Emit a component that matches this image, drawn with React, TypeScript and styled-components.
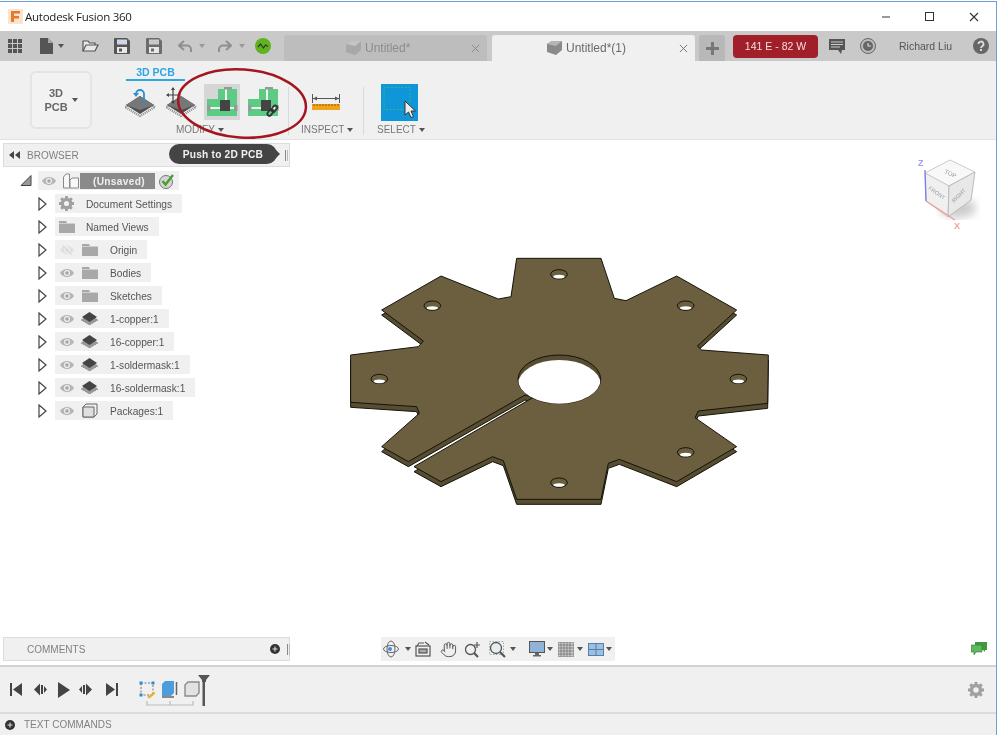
import React, { FC } from "react";
import styled, { createGlobalStyle } from "styled-components";
import { Hand } from "lucide-react";

const GlobalStyles = createGlobalStyle`
html, body {
    margin: 0;
    padding: 0;
    height: 100%;
    background: #fff;
    overflow: hidden;
}
body {
    font-family: "Liberation Sans", Arial, sans-serif;
}
svg {
    display: block;
    flex-shrink: 0;
}
`;

const Window = styled.div`
    position: relative;
    box-sizing: border-box;
    width: 997px;
    height: 734px;
    margin-top: 1px;
    border-top: 1px solid #6f9fd6;
    border-right: 1px solid #6f9fd6;
    display: flex;
    flex-direction: column;
    background: #fff;
    filter: blur(0.45px);
`;

const TitleBar = styled.div`
    height: 29px;
    display: flex;
    align-items: center;
    padding-left: 8px;
    font-family: "Open Sans", sans-serif;
    font-size: 11.5px;
    letter-spacing: -0.25px;
    color: #222;
`;

const TitleText = styled.span`
    margin-left: 2px;
    flex: 1;
`;

const WinButton = styled.div`
    width: 44px;
    display: flex;
    justify-content: center;
`;

const Toolbar = styled.div`
    height: 30px;
    background: #c9c9c9;
    display: flex;
    align-items: center;
    padding-left: 8px;
    box-sizing: border-box;
`;

const Slot = styled.div<{ $ml?: number }>`
    margin-left: ${(p) => p.$ml ?? 0}px;
    display: flex;
    align-items: center;
`;

const Caret = styled.div<{ $ml?: number; $color?: string }>`
    margin-left: ${(p) => p.$ml ?? 4}px;
    width: 0;
    height: 0;
    border-left: 3px solid transparent;
    border-right: 3px solid transparent;
    border-top: 4px solid ${(p) => p.$color ?? "#555"};
`;

const Tab = styled.div<{ $active?: boolean; $ml: number }>`
    align-self: flex-end;
    margin-left: ${(p) => p.$ml}px;
    width: 203px;
    height: 26px;
    box-sizing: border-box;
    border-radius: 3px 3px 0 0;
    background: ${(p) => (p.$active ? "#f0f0f0" : "#bdbdbd")};
    color: ${(p) => (p.$active ? "#6a6a6a" : "#8c8c8c")};
    display: flex;
    align-items: center;
    padding: 0 7px 0 ${(p) => (p.$active ? 55 : 62)}px;
    font-size: 12px;
    span {
        margin-left: 4px;
        flex: 1;
    }
`;

const AddTab = styled.div`
    align-self: flex-end;
    margin-left: 4px;
    width: 26px;
    height: 26px;
    background: #b8b8b8;
    border-radius: 3px 3px 0 0;
    display: flex;
    align-items: center;
    justify-content: center;
`;

const JobStatus = styled.div`
    margin-left: 8px;
    width: 85px;
    height: 23px;
    background: #a11f28;
    border-radius: 4px;
    color: #f3dede;
    font-size: 10.5px;
    display: flex;
    align-items: center;
    justify-content: center;
`;

const UserName = styled.div`
    margin-left: 23px;
    width: 62px;
    font-size: 10.5px;
    color: #555;
`;

const TopIcon = styled.div<{ $ml: number }>`
    margin-left: ${(p) => p.$ml}px;
`;

const Ribbon = styled.div`
    height: 78px;
    background: #f0f0f0;
    border-bottom: 1px solid #e2e2e2;
    display: flex;
    padding-left: 30px;
`;

const ModeButton = styled.div`
    margin-top: 10px;
    width: 62px;
    height: 58px;
    box-sizing: border-box;
    background: #f2f2f2;
    border: 2px solid #e4e4e4;
    border-radius: 6px;
    display: flex;
    align-items: center;
    justify-content: center;
    gap: 4px;
    font-size: 11px;
    font-weight: bold;
    line-height: 14px;
    color: #666;
    text-align: center;
`;

const Group = styled.div<{ $ml: number; $w: number }>`
    margin-left: ${(p) => p.$ml}px;
    width: ${(p) => p.$w}px;
    display: flex;
    flex-direction: column;
`;

const GroupHead = styled.div`
    height: 20px;
    margin-bottom: 3px;
    box-sizing: border-box;
    width: 59px;
    padding-top: 5px;
    color: #2ea6e2;
    border-bottom: 2px solid #2ea6e2;
    font-size: 10.5px;
    font-weight: bold;
    text-align: center;
    line-height: 13px;
`;

const GroupSpacer = styled.div`
    height: 23px;
`;

const GroupIcons = styled.div<{ $pad?: number; $gap?: number }>`
    height: 36px;
    padding-left: ${(p) => p.$pad ?? 0}px;
    gap: ${(p) => p.$gap ?? 0}px;
    display: flex;
    align-items: center;
`;

const ToolRow = styled(GroupIcons)`
    margin-left: -4px;
`;

const ToolButton = styled.div<{ $active?: boolean }>`
    width: 36px;
    height: 36px;
    flex-shrink: 0;
    display: flex;
    align-items: center;
    justify-content: center;
    background: ${(p) => (p.$active ? "#d6d6d6" : "transparent")};
`;

const GroupLabel = styled.div<{ $pad: number }>`
    margin-top: 4px;
    padding-left: ${(p) => p.$pad}px;
    display: flex;
    align-items: center;
    gap: 3px;
    font-size: 10px;
    line-height: 12px;
    color: #777;
`;

const Separator = styled.div`
    margin-top: 26px;
    height: 48px;
    width: 1px;
    background: #d9d9d9;
`;

const Canvas = styled.div`
    position: relative;
    flex: 1;
    display: flex;
    flex-direction: column;
    padding: 3px 0 4px 3px;
    min-height: 0;
`;

const Part = styled.svg`
    position: absolute;
    left: 340px;
    top: 110px;
`;

const Panel = styled.div`
    position: relative;
    box-sizing: border-box;
    width: 287px;
    height: 24px;
    background: #f0f0f0;
    border: 1px solid #dcdcdc;
    display: flex;
    align-items: center;
    font-size: 10px;
    color: #808080;
`;

const PanelTitle = styled.span`
    margin-left: 7px;
    flex: 1;
`;

const Grip = styled.div`
    margin-right: 1px;
    width: 3px;
    height: 11px;
    box-sizing: border-box;
    border-left: 1px solid #888;
    border-right: 1px solid #bbb;
`;

const Tooltip = styled.div`
    position: absolute;
    left: 165px;
    top: 0;
    width: 108px;
    height: 20px;
    border-radius: 10px;
    background: #444;
    color: #f0f0f0;
    font-size: 10.2px;
    font-weight: bold;
    letter-spacing: 0.2px;
    display: flex;
    align-items: center;
    justify-content: center;
    &::after {
        content: "";
        position: absolute;
        right: -3px;
        top: 6px;
        border-left: 4px solid #444;
        border-top: 4px solid transparent;
        border-bottom: 4px solid transparent;
    }
`;

const Tree = styled.div`
    margin-top: 2px;
    display: flex;
    flex-direction: column;
`;

const RootRow = styled.div`
    height: 23px;
    display: flex;
    align-items: center;
    padding-left: 17px;
`;

const RootPill = styled.div`
    margin-left: 6px;
    width: 141px;
    height: 19px;
    background: #f0f0f0;
    display: flex;
    align-items: center;
    padding-left: 4px;
    box-sizing: border-box;
`;

const RootName = styled.div`
    margin-left: 6px;
    width: 93px;
    height: 16px;
    background: #8a8a8a;
    display: flex;
    align-items: center;
    font-size: 10.2px;
    font-weight: bold;
    letter-spacing: 0.3px;
    color: #eee;
    span {
        margin-left: 13px;
        padding-top: 1px;
    }
`;

const Row = styled.div`
    height: 23px;
    display: flex;
    align-items: center;
    padding-left: 35px;
`;

const RowPill = styled.div`
    margin-left: 8px;
    height: 19px;
    background: #f0f0f0;
    display: flex;
    align-items: center;
    padding-right: 10px;
    font-size: 10.2px;
    color: #555;
`;

const IconSlot = styled.div`
    width: 23px;
    display: flex;
    justify-content: center;
`;

const RowText = styled.span<{ $wide: boolean }>`
    margin-left: ${(p) => (p.$wide ? 9 : 8)}px;
    padding-top: 1px;
`;

const CommentsPanel = styled(Panel)`
    margin-top: auto;
    padding-left: 20px;
`;

const NavBar = styled.div`
    position: absolute;
    left: 381px;
    bottom: 4px;
    width: 234px;
    height: 24px;
    background: #f0f0f0;
    display: flex;
    align-items: center;
    padding-left: 2px;
    box-sizing: border-box;
`;

const CubeHolder = styled.svg`
    position: absolute;
    left: 916px;
    top: 14px;
`;

const GreenNote = styled.div`
    position: absolute;
    left: 971px;
    bottom: 9px;
`;

const Timeline = styled.div`
    height: 45px;
    background: #f0f0f0;
    border-top: 2px solid #d2d2d2;
    display: flex;
    align-items: center;
    padding-left: 10px;
`;

const TimelineGear = styled.div`
    margin-left: auto;
    margin-right: 12px;
`;

const CommandBar = styled.div`
    height: 23px;
    box-sizing: border-box;
    background: #f0f0f0;
    border-top: 2px solid #dcdcdc;
    display: flex;
    align-items: center;
    padding-left: 5px;
    gap: 9px;
    font-size: 10px;
    color: #808080;
`;

const Highlight = styled.svg`
    position: absolute;
    left: 170px;
    top: 60px;
    pointer-events: none;
`;

/* ---- drawings ---- */

const FusionLogo = () => (
    <svg width="15" height="15" viewBox="0 0 15 15">
        <rect width="15" height="15" fill="#fbe3cd" />
        <path d="M3 2h9v2.5H6V7h5v2.5H6V13H3z" fill="#e8792b" />
    </svg>
);

const AppGrid = () => (
    <svg width="14" height="14" viewBox="0 0 14 14" fill="#555">
        {[0, 5, 10].map((y) =>
            [0, 5, 10].map((x) => <rect key={`${x}-${y}`} x={x} y={y} width="4" height="4" />)
        )}
    </svg>
);

const FileIcon = () => (
    <svg width="13" height="16" viewBox="0 0 13 16">
        <path d="M0 0h8l5 5v11H0z" fill="#555" />
        <path d="M8 0v5h5z" fill="#aaa" />
    </svg>
);

const OpenIcon = () => (
    <svg width="17" height="12" viewBox="0 0 17 12" fill="#e8e8e8" stroke="#555" strokeWidth="1.2">
        <path d="M1 11V1h5l1.5 2H13v2" />
        <path d="M1 11l3-6h12l-3 6z" />
    </svg>
);

const SaveIcon: FC<{ color: string; bar: string }> = ({ color, bar }) => (
    <svg width="16" height="16" viewBox="0 0 16 16">
        <path d="M0 1a1 1 0 0 1 1-1h12l3 3v12a1 1 0 0 1-1 1H1a1 1 0 0 1-1-1z" fill={color} />
        <rect x="3" y="1.5" width="10" height="5" fill={bar} />
        <rect x="3" y="9" width="10" height="6" fill="#e8e8e8" />
        <rect x="5" y="10.5" width="3" height="3" fill={color} />
    </svg>
);

const UndoIcon: FC<{ flip?: boolean }> = ({ flip }) => (
    <svg width="14" height="13" viewBox="0 0 14 13">
        <g transform={flip ? "matrix(-1 0 0 1 14 0)" : undefined}>
            <path d="M6 1L1 5.5 6 10M1.5 5.5H9a4 4 0 0 1 4 4V12" fill="none" stroke="#8f8f8f" strokeWidth="2" />
        </g>
    </svg>
);

const StatusOrb = () => (
    <svg width="16" height="16" viewBox="0 0 16 16">
        <circle cx="8" cy="8" r="8" fill="#5fb31f" />
        <path d="M3 9l2.5-3 3 4 2-3 2.5 1.5" fill="none" stroke="#333" strokeWidth="1.2" />
    </svg>
);

const TabCube: FC<{ light?: boolean }> = ({ light }) => (
    <svg width="15" height="14" viewBox="0 0 15 14">
        <path d="M0 3l5-3h10v9l-6 5-9-3z" fill={light ? "#a8a8a8" : "#8a8a8a"} />
        <path d="M0 3l9 2 6-5H5z" fill={light ? "#c4c4c4" : "#b5b5b5"} />
    </svg>
);

const CloseGlyph: FC<{ color: string; size: number }> = ({ color, size }) => (
    <svg width={size} height={size} viewBox="0 0 10 10">
        <path d="M1 1l8 8M9 1l-8 8" stroke={color} strokeWidth="1.1" />
    </svg>
);

const PlusGlyph = () => (
    <svg width="13" height="13" viewBox="0 0 13 13">
        <path d="M5 0h3v5h5v3H8v5H5V8H0V5h5z" fill="#777" />
    </svg>
);

const ChatIcon = () => (
    <svg width="16" height="15" viewBox="0 0 16 15">
        <path d="M0 0h16v11h-3l-1 4-3-4H0z" fill="#555" />
        <path d="M2 3h12M2 5.5h12M2 8h9" stroke="#ccc" strokeWidth="1" />
    </svg>
);

const ClockIcon = () => (
    <svg width="16" height="16" viewBox="0 0 16 16">
        <circle cx="8" cy="8" r="7.5" fill="#bbb" stroke="#666" />
        <circle cx="8" cy="8" r="5" fill="#666" />
        <path d="M8 5v3h3" fill="none" stroke="#ddd" strokeWidth="1.1" />
    </svg>
);

const HelpIcon = () => (
    <svg width="16" height="16" viewBox="0 0 16 16">
        <circle cx="8" cy="8" r="8" fill="#666" />
        <path d="M5.5 6a2.5 2.5 0 1 1 3.7 2.2C8.3 8.8 8 9 8 10" fill="none" stroke="#ddd" strokeWidth="1.8" />
        <rect x="7" y="11" width="2" height="2" fill="#ddd" />
    </svg>
);

const ChipBase = () => (
    <>
        <polygon points="15,12 30,20 15,29 0,20" fill="none" stroke="#8a8a8a" strokeWidth="2.4" strokeDasharray="1 1" />
        <polygon points="15,9 29,18 15,27 1,18" fill="#4f4f4f" />
        <polygon points="15,9 29,18 15,23 1,18" fill="#777" />
    </>
);

const ChipUndo = () => (
    <svg width="31" height="30" viewBox="0 0 31 30">
        <ChipBase />
        <path d="M19 17V7a4 4 0 0 0-8 0" fill="none" stroke="#2d8fd0" strokeWidth="1.8" />
        <path d="M8 6l3 4 3-4z" fill="#2d8fd0" />
    </svg>
);

const ChipMove = () => (
    <svg width="31" height="30" viewBox="0 0 31 30">
        <ChipBase />
        <path d="M7 1v15M1 8h13" stroke="#444" strokeWidth="1.2" />
        <path d="M7 0l2 3H5zM7 17l2-3H5zM0 8l3-2v4zM15 8l-3-2v4z" fill="#444" />
    </svg>
);

const PcbIcon: FC<{ linked?: boolean }> = ({ linked }) => (
    <svg width="31" height="30" viewBox="0 0 31 30">
        <path d="M11 2h19v27H0V12h11z" fill="#5ccb83" />
        <path d="M19 2v12M0 21h30" stroke="#eef6ef" strokeWidth="2" />
        <rect x="13" y="13" width="10" height="11" fill="#444" />
        <rect x="17" y="0" width="8" height="2.5" fill="#999" />
        <rect x="0" y="18" width="3.5" height="6" fill="#999" />
        <rect x="27" y="18" width="3.5" height="6" fill="#999" />
        {linked && (
            <g fill="none" stroke="#333" strokeWidth="1.8">
                <rect x="19" y="24" width="7" height="4" rx="2" transform="rotate(-50 22 26)" />
                <rect x="23" y="20" width="7" height="4" rx="2" transform="rotate(-50 26 22)" />
            </g>
        )}
    </svg>
);

const RulerIcon = () => (
    <svg width="28" height="16" viewBox="0 0 28 16">
        <path d="M.5 0v9M27.5 0v9M1 4.5h26" stroke="#555" fill="none" />
        <path d="M1 4.5l4-2v4zM27 4.5l-4-2v4z" fill="#555" />
        <rect y="10" width="28" height="6" fill="#f2a31b" />
        <path d="M2 10v2M5 10v2M8 10v2M11 10v2M14 10v2M17 10v2M20 10v2M23 10v2M26 10v2" stroke="#8a5a10" />
    </svg>
);

const SelectIcon = () => (
    <svg width="37" height="37" viewBox="0 0 37 37">
        <rect width="37" height="37" fill="#0f96d8" />
        <rect x="3" y="3.5" width="26" height="22" fill="none" stroke="#3bb08a" strokeDasharray="2 1.5" />
        <path d="M24 17v14l3.5-3 2.5 5.5 2.5-1-2.5-5.5h4.5z" fill="#eee" stroke="#333" />
    </svg>
);

const Collapse = () => (
    <svg width="11" height="8" viewBox="0 0 11 8" fill="#444">
        <path d="M5 0v8L0 4zM11 0v8L6 4z" />
    </svg>
);

const PlusDot = () => (
    <svg width="10" height="10" viewBox="0 0 10 10">
        <circle cx="5" cy="5" r="5" fill="#333" />
        <path d="M5 2.5v5M2.5 5h5" stroke="#ddd" strokeWidth="1.1" />
    </svg>
);

const Expanded = () => (
    <svg width="12" height="11" viewBox="0 0 12 11">
        <path d="M1 10.5L11 .5v10z" fill="#999" stroke="#444" />
    </svg>
);

const Collapsed = () => (
    <svg width="9" height="14" viewBox="0 0 9 14">
        <path d="M1 1l7 6-7 6z" fill="#fff" stroke="#444" strokeWidth="1.2" />
    </svg>
);

const Eye: FC<{ off?: boolean }> = ({ off }) => (
    <svg width="14" height="10" viewBox="0 0 14 10" opacity={off ? 0.25 : 1}>
        <path d="M0 5c3-5.5 11-5.5 14 0-3 5.5-11 5.5-14 0z" fill="#b5b5b5" />
        <circle cx="7" cy="5" r="3" fill="#f0f0f0" />
        <circle cx="7" cy="5" r="1.8" fill="#a5a5a5" />
        {off && <path d="M2 0l10 10" stroke="#888" />}
    </svg>
);

const FolderIcon = () => (
    <svg width="16" height="12" viewBox="0 0 16 12">
        <path d="M0 0h7l1 2h8v10H0z" fill="#a8a8a8" />
        <path d="M0 2.5h16" stroke="#d0d0d0" />
    </svg>
);

const CogIcon: FC<{ size?: number }> = ({ size = 15 }) => (
    <svg width={size} height={size} viewBox="0 0 16 16">
        <circle cx="8" cy="8" r="4.5" fill="none" stroke="#a0a0a0" strokeWidth="3.5" />
        <path d="M8 0v3M8 13v3M0 8h3M13 8h3M2.3 2.3l2.100 2.100M11.6 11.6l2.100 2.100M13.7 2.3l-2.100 2.100M4.4 11.6l-2.100 2.100" stroke="#a0a0a0" strokeWidth="3" />
    </svg>
);

const SmallChip = () => (
    <svg width="17" height="13" viewBox="0 0 17 13">
        <path d="M8.5 3L17 8l-8.5 5L0 8z" fill="#999" stroke="#777" strokeDasharray="1 1" strokeWidth=".8" />
        <path d="M8.5 0L16 5 8.5 10 1 5z" fill="#444" />
    </svg>
);

const SmallBox = () => (
    <svg width="16" height="15" viewBox="0 0 16 15">
        <path d="M1 4l3-3h11v10l-3 3H1z" fill="#f0f0f0" stroke="#666" />
        <path d="M1 4h11v10H1z" fill="#dfdfdf" stroke="#666" />
    </svg>
);

const ComponentIcon = () => (
    <svg width="18" height="16" viewBox="0 0 18 16">
        <rect width="18" height="16" fill="#f0f0f0" />
        <path d="M1.5 4l2.5-3h3.500v14h-6zM8 7l2-2h6.500v10H8z" fill="#f8f8f8" stroke="#888" />
    </svg>
);

const CheckBadge = () => (
    <svg width="16" height="16" viewBox="0 0 16 16">
        <circle cx="7" cy="9" r="6.5" fill="#d5d5d5" stroke="#777" />
        <path d="M3.5 8l3 3.5L14 2" fill="none" stroke="#45a030" strokeWidth="2.4" />
    </svg>
);

const OrbitIcon = () => (
    <svg width="16" height="18" viewBox="0 0 16 18" fill="none" stroke="#666">
        <ellipse cx="8" cy="9" rx="4" ry="8" />
        <ellipse cx="8" cy="9" rx="7.5" ry="3.5" />
        <circle cx="7" cy="9" r="2" fill="#3a8fe0" stroke="none" />
    </svg>
);

const FilmIcon = () => (
    <svg width="16" height="16" viewBox="0 0 16 16" fill="none" stroke="#555" strokeWidth="1.2">
        <rect x="1" y="5" width="14" height="10" />
        <rect x="4" y="8" width="8" height="4" fill="#aaa" />
        <path d="M2 5l2-3h5M10 1l4 3" />
    </svg>
);

const ZoomPlusIcon = () => (
    <svg width="17" height="17" viewBox="0 0 17 17" fill="none" stroke="#555">
        <circle cx="6.5" cy="8.5" r="5" strokeWidth="1.3" />
        <path d="M10 12l4 4" strokeWidth="2.2" />
        <path d="M13 1v6M10 4h6" strokeWidth="1.2" />
    </svg>
);

const ZoomFitIcon = () => (
    <svg width="17" height="17" viewBox="0 0 17 17" fill="none" stroke="#555">
        <rect x=".5" y=".5" width="14" height="13" stroke="#aaa" strokeDasharray="1.5 1.5" />
        <circle cx="7" cy="7" r="5.5" fill="#e6eef2" strokeWidth="1.3" />
        <path d="M11 11l5 5" strokeWidth="2.2" />
    </svg>
);

const MonitorIcon = () => (
    <svg width="16" height="16" viewBox="0 0 16 16">
        <rect x=".5" y=".5" width="15" height="11" fill="#8fb4d8" stroke="#555" />
        <path d="M6 12h4v2h2v1.5H4V14h2z" fill="#666" />
    </svg>
);

const GridIcon = () => (
    <svg width="16" height="15" viewBox="0 0 16 15" stroke="#777" strokeWidth=".8">
        <rect width="16" height="15" fill="#ccc" />
        <path d="M3 0v15M6 0v15M9 0v15M12 0v15M0 3h16M0 6h16M0 9h16M0 12h16" />
    </svg>
);

const PanesIcon = () => (
    <svg width="16" height="13" viewBox="0 0 16 13">
        <rect width="16" height="13" fill="#557ea8" />
        <rect x="1" y="1" width="6.5" height="5" fill="#9cc0e2" />
        <rect x="8.5" y="1" width="6.5" height="5" fill="#9cc0e2" />
        <rect x="1" y="7" width="6.5" height="5" fill="#9cc0e2" />
        <rect x="8.5" y="7" width="6.5" height="5" fill="#9cc0e2" />
    </svg>
);

const TransportIcons = () => (
    <svg width="112" height="16" viewBox="0 0 112 16" fill="#444">
        <path d="M0 1h2v13H0zM12 1v13L3 7.5z" />
        <path d="M24 7.5l6-6v12zM31 3h2v9h-2zM34 4l3 3.5-3 3.5z" />
        <path d="M48 0l12 8-12 8z" />
        <path d="M72 4l-3 3.5 3 3.5zM73 3h2v9h-2zM76 1.5l6 6-6 6z" />
        <path d="M96 1v13l9-6.5zM106 1h2v13h-2z" />
    </svg>
);

const TimelineFeatures = () => (
    <svg width="74" height="34" viewBox="0 0 74 34" fill="none">
        <rect x="3" y="10" width="12" height="12" stroke="#777" strokeDasharray="2 1.5" />
        <rect x="1.5" y="8.5" width="3" height="3" fill="#2d8fd0" />
        <rect x="13.5" y="8.5" width="3" height="3" fill="#2d8fd0" />
        <rect x="1.5" y="20.5" width="3" height="3" fill="#2d8fd0" />
        <path d="M9 24l7-5 1.5 1.5-6 5z" fill="#f0b030" />
        <path d="M24 11l3-3h9v12l-3 3H24z" fill="#4d9ddc" />
        <path d="M24 24h12M38.5 9v13" stroke="#666" strokeWidth="1.5" />
        <path d="M47 12l3-3h11v11l-3 3H47z" fill="#e2e2e2" stroke="#8a8a8a" strokeWidth="1.4" />
        <path d="M9 28v4h46v-4M32 28v4" stroke="#bbb" strokeWidth="1.2" />
        <path d="M60 2h12l-4 5v2h-4V7z" fill="#555" />
        <rect x="64.5" y="6" width="2.5" height="27" fill="#555" />
    </svg>
);

const NoteIcon = () => (
    <svg width="16" height="14" viewBox="0 0 16 14">
        <path d="M4 0h12v8h-2v2l-2-2H4z" fill="#3f9a3f" />
        <path d="M0 3h11v7H5l-2 3v-3H0z" fill="#5fb85f" stroke="#2e7d2e" strokeWidth=".6" />
    </svg>
);

/* outline of the plate, in 3x units so the points stay easy to compare */
const plateOutline =
    "530,25 783,25 823,145 858,152 1010,78 1190,180 1072,288 1085,300 1285,315 1283,460 1075,483 1065,503 1190,590 1010,695 838,628 805,640 783,748 530,748 490,632 458,620 303,695 222,650 580,442 555,435 205,635 125,590 238,490 230,470 32,457 32,315 235,290 250,273 125,180 303,78 475,147 513,140";

const boltHoles: [number, number][] = [
    [277, 167],
    [657, 73],
    [1037, 167],
    [118, 387],
    [1195, 387],
    [1037, 607],
    [657, 698],
];

const PlateDrawing = () => (
    <Part width="440" height="265" viewBox="0 0 1320 795">
        <defs>
            <clipPath id="bore">
                <ellipse cx="658" cy="388" rx="124" ry="73" />
            </clipPath>
        </defs>
        <polygon
            points={plateOutline}
            transform="translate(0 15)"
            fill="#574d31"
            stroke="#15130b"
            strokeWidth="3"
            strokeLinejoin="round"
        />
        <polygon points={plateOutline} fill="#6b5f40" stroke="#15130b" strokeWidth="3" strokeLinejoin="round" />
        <ellipse cx="658" cy="388" rx="124" ry="73" fill="#574d31" stroke="#15130b" strokeWidth="3" />
        <ellipse cx="658" cy="403" rx="124" ry="73" fill="#fff" clipPath="url(#bore)" />
        {boltHoles.map(([x, y]) => (
            <g key={`${x}-${y}`}>
                <ellipse cx={x} cy={y} rx="25" ry="14" fill="#6b5f40" stroke="#15130b" strokeWidth="3" />
                <ellipse cx={x} cy={y + 7} rx="17" ry="5.5" fill="#fff" />
            </g>
        ))}
    </Part>
);

const ViewCube = () => (
    <CubeHolder width="66" height="76" viewBox="916 154 66 76">
        <defs>
            <filter id="cubeShadow">
                <feGaussianBlur stdDeviation="4" />
            </filter>
        </defs>
        <ellipse cx="958" cy="208" rx="18" ry="10" fill="#ccc" filter="url(#cubeShadow)" />
        <path d="M950 160l25 12-26 14-24-13z" fill="#f8f8f8" stroke="#ccc" />
        <path d="M925 173l24 13-1 31-22-16z" fill="#f0f0f0" stroke="#ccc" />
        <path d="M949 186l26-14-4 28-23 17z" fill="#e8e8e8" stroke="#bbb" />
        <path d="M925 170l1 31" stroke="#7a7ae8" strokeWidth="1.3" />
        <path d="M926 201l29 19" stroke="#f09a9a" strokeWidth="1.3" />
        <g fontFamily="Liberation Sans, sans-serif" fill="#999">
            <text x="944" y="173" fontSize="6" transform="rotate(25 944 173)">TOP</text>
            <text x="928" y="189" fontSize="5.5" transform="rotate(35 928 189)">FRONT</text>
            <text x="954" y="203" fontSize="5.5" transform="rotate(-45 954 203)">RIGHT</text>
        </g>
        <text x="918" y="166" fontSize="9" fontWeight="bold" fill="#a0a0f0" fontFamily="Liberation Sans, sans-serif">Z</text>
        <text x="954" y="229" fontSize="9" fontWeight="bold" fill="#f0a0a0" fontFamily="Liberation Sans, sans-serif">X</text>
    </CubeHolder>
);

type TreeItem = { name: string; eye?: boolean; off?: boolean; icon: React.ReactNode };

const treeItems: TreeItem[] = [
    { name: "Document Settings", icon: <CogIcon /> },
    { name: "Named Views", icon: <FolderIcon /> },
    { name: "Origin", eye: true, off: true, icon: <FolderIcon /> },
    { name: "Bodies", eye: true, icon: <FolderIcon /> },
    { name: "Sketches", eye: true, icon: <FolderIcon /> },
    { name: "1-copper:1", eye: true, icon: <SmallChip /> },
    { name: "16-copper:1", eye: true, icon: <SmallChip /> },
    { name: "1-soldermask:1", eye: true, icon: <SmallChip /> },
    { name: "16-soldermask:1", eye: true, icon: <SmallChip /> },
    { name: "Packages:1", eye: true, icon: <SmallBox /> },
];

const App: FC = () => {
    return (
        <>
            <GlobalStyles />
            <Window>
                <TitleBar>
                    <FusionLogo />
                    <TitleText>Autodesk Fusion 360</TitleText>
                    <WinButton>
                        <svg width="10" height="10" viewBox="0 0 10 10">
                            <path d="M1 5h8" stroke="#333" />
                        </svg>
                    </WinButton>
                    <WinButton>
                        <svg width="10" height="10" viewBox="0 0 10 10">
                            <rect x=".5" y=".5" width="8" height="8" fill="none" stroke="#333" />
                        </svg>
                    </WinButton>
                    <WinButton>
                        <CloseGlyph color="#333" size={10} />
                    </WinButton>
                </TitleBar>

                <Toolbar>
                    <AppGrid />
                    <Slot $ml={18}>
                        <FileIcon />
                        <Caret $ml={5} />
                    </Slot>
                    <Slot $ml={18}>
                        <OpenIcon />
                    </Slot>
                    <Slot $ml={15}>
                        <SaveIcon color="#555" bar="#cfd6e8" />
                    </Slot>
                    <Slot $ml={16}>
                        <SaveIcon color="#6c6c6c" bar="#c9c9c9" />
                    </Slot>
                    <Slot $ml={16}>
                        <UndoIcon />
                        <Caret $ml={7} $color="#999" />
                    </Slot>
                    <Slot $ml={13}>
                        <UndoIcon flip />
                        <Caret $ml={7} $color="#999" />
                    </Slot>
                    <Slot $ml={10}>
                        <StatusOrb />
                    </Slot>
                    <Tab $ml={13}>
                        <TabCube light />
                        <span>Untitled*</span>
                        <CloseGlyph color="#8a8a8a" size={9} />
                    </Tab>
                    <Tab $active $ml={5}>
                        <TabCube />
                        <span>Untitled*(1)</span>
                        <CloseGlyph color="#777" size={9} />
                    </Tab>
                    <AddTab>
                        <PlusGlyph />
                    </AddTab>
                    <JobStatus>141 E - 82 W</JobStatus>
                    <TopIcon $ml={11}>
                        <ChatIcon />
                    </TopIcon>
                    <TopIcon $ml={15}>
                        <ClockIcon />
                    </TopIcon>
                    <UserName>Richard Liu</UserName>
                    <TopIcon $ml={12}>
                        <HelpIcon />
                    </TopIcon>
                </Toolbar>

                <Ribbon>
                    <ModeButton>
                        <div>
                            3D
                            <br />
                            PCB
                        </div>
                        <Caret $ml={0} />
                    </ModeButton>
                    <Group $ml={34} $w={162}>
                        <GroupHead>3D PCB</GroupHead>
                        <ToolRow $gap={5}>
                            <ToolButton>
                                <ChipUndo />
                            </ToolButton>
                            <ToolButton>
                                <ChipMove />
                            </ToolButton>
                            <ToolButton $active>
                                <PcbIcon />
                            </ToolButton>
                            <ToolButton>
                                <PcbIcon linked />
                            </ToolButton>
                        </ToolRow>
                        <GroupLabel $pad={50}>
                            MODIFY <Caret $ml={0} />
                        </GroupLabel>
                    </Group>
                    <Separator />
                    <Group $ml={12} $w={62}>
                        <GroupSpacer />
                        <GroupIcons $pad={11}>
                            <RulerIcon />
                        </GroupIcons>
                        <GroupLabel $pad={0}>
                            INSPECT <Caret $ml={0} />
                        </GroupLabel>
                    </Group>
                    <Separator />
                    <Group $ml={13} $w={62}>
                        <GroupSpacer />
                        <GroupIcons $pad={4}>
                            <SelectIcon />
                        </GroupIcons>
                        <GroupLabel $pad={0}>
                            SELECT <Caret $ml={0} />
                        </GroupLabel>
                    </Group>
                </Ribbon>

                <Canvas>
                    <PlateDrawing />
                    <ViewCube />
                    <Panel>
                        <Slot $ml={5}>
                            <Collapse />
                        </Slot>
                        <PanelTitle>BROWSER</PanelTitle>
                        <Grip />
                        <Tooltip>Push to 2D PCB</Tooltip>
                    </Panel>
                    <Tree>
                        <RootRow>
                            <Expanded />
                            <RootPill>
                                <Eye />
                                <RootName>
                                    <ComponentIcon />
                                    <span>(Unsaved)</span>
                                </RootName>
                                <Slot $ml={4}>
                                    <CheckBadge />
                                </Slot>
                            </RootPill>
                        </RootRow>
                        {treeItems.map((item) => (
                            <Row key={item.name}>
                                <Collapsed />
                                <RowPill>
                                    {item.eye && (
                                        <IconSlot>
                                            <Eye off={item.off} />
                                        </IconSlot>
                                    )}
                                    <IconSlot>{item.icon}</IconSlot>
                                    <RowText $wide={!!item.eye}>{item.name}</RowText>
                                </RowPill>
                            </Row>
                        ))}
                    </Tree>
                    <CommentsPanel>
                        <Slot $ml={3}>COMMENTS</Slot>
                        <Slot $ml={185}>
                            <PlusDot />
                        </Slot>
                        <Slot $ml={7}>
                            <Grip />
                        </Slot>
                    </CommentsPanel>
                    <NavBar>
                        <OrbitIcon />
                        <Caret $ml={6} />
                        <Slot $ml={4}>
                            <FilmIcon />
                        </Slot>
                        <Slot $ml={9}>
                            <Hand size={17} color="#555" strokeWidth={1.4} />
                        </Slot>
                        <Slot $ml={7}>
                            <ZoomPlusIcon />
                        </Slot>
                        <Slot $ml={8}>
                            <ZoomFitIcon />
                            <Caret />
                        </Slot>
                        <Slot $ml={13}>
                            <MonitorIcon />
                            <Caret $ml={2} />
                        </Slot>
                        <Slot $ml={5}>
                            <GridIcon />
                            <Caret $ml={3} />
                        </Slot>
                        <Slot $ml={5}>
                            <PanesIcon />
                            <Caret $ml={2} />
                        </Slot>
                    </NavBar>
                    <GreenNote>
                        <NoteIcon />
                    </GreenNote>
                </Canvas>

                <Timeline>
                    <Slot $ml={0}>
                        <TransportIcons />
                    </Slot>
                    <Slot $ml={16}>
                        <TimelineFeatures />
                    </Slot>
                    <TimelineGear>
                        <CogIcon size={16} />
                    </TimelineGear>
                </Timeline>
                <CommandBar>
                    <PlusDot />
                    TEXT COMMANDS
                </CommandBar>

                <Highlight width="140" height="84" viewBox="170 60 140 84">
                    <ellipse
                        cx="242"
                        cy="101.5"
                        rx="64"
                        ry="34"
                        fill="none"
                        stroke="#a3161f"
                        strokeWidth="2.5"
                        transform="rotate(4 242 102)"
                    />
                </Highlight>
            </Window>
        </>
    );
};

export default App;
